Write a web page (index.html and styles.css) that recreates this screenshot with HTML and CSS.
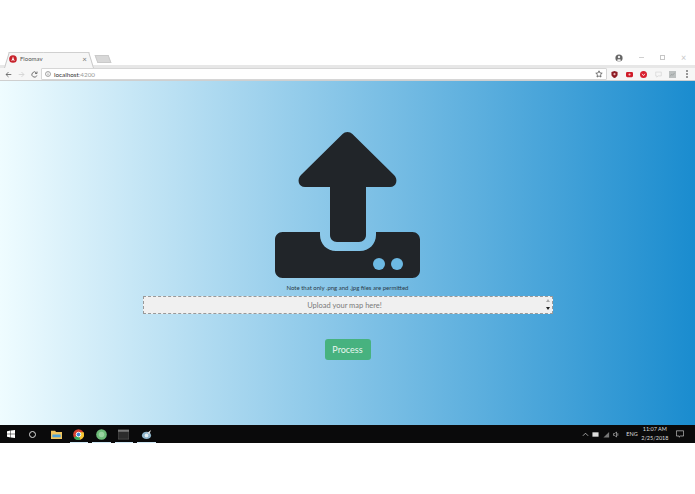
FILE: index.html
```html
<!DOCTYPE html>
<html lang="en">
<head>
  <meta charset="UTF-8" />
  <title>Floomav</title>
  <link rel="stylesheet" href="styles.css">
</head>
<body>
  <div class="shot">
    <!-- browser tabs -->
    <div class="tabstrip">
      <div class="tab">
        <svg class="favicon" viewBox="0 0 10 10"><circle cx="5" cy="5" r="4.800" fill="#c8232c"/><path d="M5 2 3 7.500h1l.4-1.200h1.200L6 7.500h1zM4.700 5.400 5 4.200l.3 1.200z" fill="#fff"/></svg>
        <span class="tab-title">Floomav</span>
        <span class="tab-close">×</span>
      </div>
      <div class="newtab"></div>
      <div class="winctl">
        <svg class="profile" viewBox="0 0 8 8"><circle cx="4" cy="4" r="3.600" fill="#666"/><circle cx="4" cy="3" r="1.200" fill="#eee"/><path d="M1.800 6.200C2.400 5 5.600 5 6.200 6.200L4 7.400z" fill="#eee"/></svg>
        <span class="min"></span>
        <span class="max"></span>
        <span class="close">×</span>
      </div>
    </div>

    <!-- address bar -->
    <div class="toolbar">
      <svg class="nav" viewBox="0 0 10 10"><path d="M9 5H1.500M5 1.500 1.500 5 5 8.500" fill="none" stroke="#5f5f5f" stroke-width="1.200"/></svg>
      <svg class="nav" viewBox="0 0 10 10"><path d="M1 5h7.500M5 1.500 8.500 5 5 8.500" fill="none" stroke="#d0d0d0" stroke-width="1.200"/></svg>
      <svg class="nav" viewBox="0 0 10 10"><path d="M8.400 6.400A3.700 3.700 0 1 1 7.700 2.600M8.600 .8v2.800H5.800" fill="none" stroke="#5f5f5f" stroke-width="1.200"/></svg>
      <div class="omnibox">
        <svg class="info" viewBox="0 0 8 8"><circle cx="4" cy="4" r="3.300" fill="none" stroke="#666" stroke-width=".8"/><path d="M4 3.400v2.400M4 2.200v.7" stroke="#666" stroke-width=".8"/></svg>
        <span class="url">localhost<span class="port">:4200</span></span>
        <svg class="star" viewBox="0 0 10 10"><path d="m5 1 1.200 2.700 2.800.3-2.100 1.900.6 2.900L5 7.400 2.500 8.800l.6-2.900L1 4l2.800-.3z" fill="none" stroke="#555"/></svg>
      </div>
      <div class="exts">
        <svg class="ext" viewBox="0 0 8 8"><path d="M.5 1 4 0l3.500 1v3.200C7.500 6 5 7.600 4 8 3 7.600.5 6 .5 4.200z" fill="#8e1c25"/><circle cx="4" cy="3.600" r="1.200" fill="#e9b7ba"/></svg>
        <svg class="ext" viewBox="0 0 8 8"><rect y="1" width="8" height="6" rx="1.500" fill="#d01c2a"/><circle cx="4" cy="4" r="1.200" fill="#f4c6ca"/></svg>
        <svg class="ext" viewBox="0 0 8 8"><circle cx="4" cy="4" r="4" fill="#d8202f"/><path d="M2.400 3.200 4 5.400l1.600-2.200" fill="none" stroke="#fbdcdf" stroke-width="1.100"/></svg>
        <svg class="ext" viewBox="0 0 8 8"><path d="M.8 1.200h6.400v4.400H3.600L2 7V5.600H.8z" fill="none" stroke="#d6d6d6" stroke-width=".8"/></svg>
        <svg class="ext" viewBox="0 0 8 8"><rect width="8" height="8" fill="#bcc0c0"/><path d="M1.500 6 3 3.500l1.200 1.400L6.500 2" fill="none" stroke="#979c9c" stroke-width=".8"/></svg>
      </div>
      <div class="kebab"><i></i><i></i><i></i></div>
    </div>

    <!-- the page itself -->
    <main class="page">
      <svg class="upload-icon" viewBox="0 0 145 146">
        <path d="M72.500 0c2 0 3.600.7 4.900 2L119 43c4.500 4.600 2.500 12-4 12H91v48c0 4-3 7-7 7H62c-4 0-7-3-7-7V55H30c-6.500 0-8.500-7.400-4-12L67.600 2c1.300-1.300 2.900-2 4.900-2z" fill="#212529"/>
        <path d="M7.500 100H45v3c0 9 7 16 16 16h24c9 0 16-7 16-16v-3h36.500c4.100 0 7.500 3.400 7.500 7.500v31c0 4.100-3.400 7.500-7.500 7.500H7.500c-4.100 0-7.500-3.400-7.500-7.500v-31c0-4.100 3.400-7.500 7.500-7.500z" fill="#212529"/>
        <circle cx="104" cy="132" r="6" class="hole"/>
        <circle cx="122" cy="132" r="6" class="hole"/>
      </svg>
      <p class="note">Note that only .png and .jpg files are permitted</p>
      <div class="dropzone">
        <span>Upload your map here!</span>
        <div class="spin"><i class="up"></i><i class="down"></i></div>
      </div>
      <button class="process">Process</button>
    </main>

    <!-- windows taskbar -->
    <footer class="taskbar">
      <div class="apps">
        <svg class="win" viewBox="0 0 9 9"><path d="M0 1.300 3.900.7v3.500H0zM4.400.6 9 0v4.200H4.400zM0 4.800h3.900v3.500L0 7.700zM4.400 4.800H9V9l-4.600-.6z" fill="#fff"/></svg>
        <span class="cortana"></span>
        <div class="app idle"><svg viewBox="0 0 12 10"><path d="M0 1h4.500l1 1.200H12V10H0z" fill="#f0c55e"/><rect x="1.500" y="5" width="9" height="3" fill="#4ea3d9"/></svg></div>
        <div class="app"><svg viewBox="0 0 12 12"><circle cx="6" cy="6" r="5.800" fill="#d9402f"/><path d="M6 6 1 9.500A5.800 5.800 0 0 0 8 11.600z" fill="#3aa757"/><path d="M6 6l2 5.600A5.800 5.800 0 0 0 11.600 3.500H6z" fill="#f7c632"/><circle cx="6" cy="6" r="2.500" fill="#3f83d8" stroke="#fff"/></svg></div>
        <div class="app"><svg viewBox="0 0 12 12"><circle cx="6" cy="6" r="5.800" fill="#6dbb78"/><circle cx="6" cy="6" r="3" fill="#9ad3a0"/></svg></div>
        <div class="app"><svg viewBox="0 0 12 10"><rect width="12" height="10" fill="#2c2c2c" stroke="#777" stroke-width=".5"/><rect width="12" height="2" fill="#777"/></svg></div>
        <div class="app"><svg viewBox="0 0 12 12"><ellipse cx="6" cy="7" rx="5" ry="4" fill="#8fb4c9"/><circle cx="6" cy="7" r="2" fill="#e6eef2"/><path d="m7 4 4-3-2 5z" fill="#d9d9d9"/></svg></div>
      </div>
      <div class="tray">
        <svg class="tray-ic" viewBox="0 0 8 8"><path d="M1 5.500 4 2.500l3 3" fill="none" stroke="#ddd" stroke-width=".8"/></svg>
        <svg class="tray-ic" viewBox="0 0 8 8"><path d="M.5 1.500h7v5h-7z" fill="#ddd"/></svg>
        <svg class="tray-ic" viewBox="0 0 8 8"><path d="M.5 7.500 7 1v6.500z" fill="#777"/></svg>
        <svg class="tray-ic" viewBox="0 0 8 8"><path d="M.5 3H2l2-2v6L2 5H.5zM5.500 2.500v3" fill="none" stroke="#ccc" stroke-width=".7"/></svg>
        <span class="lang">ENG</span>
        <div class="clock"><span>11:07 AM</span><span>2/25/2018</span></div>
        <svg class="notif" viewBox="0 0 10 10"><path d="M.5 1h9v6.500H5.500L4 9V7.500H.5z" fill="none" stroke="#ddd" stroke-width=".8"/></svg>
      </div>
    </footer>
  </div>
</body>
</html>
```

FILE: styles.css
```css
*{box-sizing:border-box;}

html,body{
  margin:0;
  height:100%;
  background:#fff;
  overflow:hidden;
}

body{
  font-family:Lato,"Liberation Sans",sans-serif;
  color:#212529;
}

.shot{
  display:flex;
  flex-direction:column;
  height:443px;
  padding-top:52px;
}

/* ---- tab strip ---- */
.tabstrip{
  position:relative;
  display:flex;
  align-items:flex-end;
  height:13px;
  padding-left:4px;
  background:#fff;
}
.tab{
  position:relative;
  z-index:1;
  display:flex;
  align-items:center;
  flex:none;
  width:89px;
  height:16px;
  margin-bottom:-3px;
  padding:0 6px 3px 5px;
}
.tab::before,
.tab::after{
  content:"";
  position:absolute;
  z-index:-1;
  top:0;
  bottom:0;
  width:50%;
  background:#f6f6f6;
  border-top:1px solid #d0d0d0;
  transform-origin:bottom;
}
.tab::before{
  left:0;
  border-left:1px solid #c8c8c8;
  transform:skewX(-17deg);
}
.tab::after{
  right:0;
  border-right:1px solid #c8c8c8;
  transform:skewX(17deg);
}
.favicon{width:8px;height:8px;margin-right:3px;}
.tab-title{font-size:6px;color:#555;}
.tab-close{margin-left:auto;font-size:8px;line-height:1;color:#777;}
.newtab{
  flex:none;
  width:14px;
  height:8px;
  margin:0 0 2px 3px;
  background:#d8d8d8;
  border:1px solid #cacaca;
  transform:skewX(20deg);
}
.winctl{
  position:absolute;
  right:0;
  top:1px;
  display:flex;
  align-items:center;
  height:9px;
}
.profile{width:8px;height:8px;margin-right:16px;}
.min{width:5px;height:1px;background:#d0d0d0;margin-right:16px;}
.max{width:5px;height:5px;border:1px solid #c6c6c6;margin-right:16px;}
.close{width:14px;font-size:9px;line-height:1;color:#c6c6c6;}

/* ---- toolbar ---- */
.toolbar{
  display:flex;
  align-items:center;
  height:16px;
  padding:0 0 0 5px;
  background:#f6f6f6;
  border-top:3px solid #e7e7e7;
  border-bottom:1px solid #cfcfcf;
}
.nav{width:7px;height:7px;margin-right:6px;}
.omnibox{
  display:flex;
  align-items:center;
  width:566px;
  height:12px;
  margin-left:-3px;
  padding:0 3px;
  background:#fff;
  border:1px solid #d6d6d6;
  border-radius:1px;
}
.info{width:6px;height:6px;margin-right:3px;}
.url{font-size:6.300px;color:#333;}
.port{color:#999;}
.star{width:8px;height:8px;margin-left:auto;}
.exts{display:flex;align-items:center;gap:7.500px;margin-left:4px;}
.ext{width:7px;height:7px;}
.kebab{display:flex;flex-direction:column;gap:1px;margin-left:10px;}
.kebab i{width:2px;height:2px;background:#777;border-radius:50%;}

/* ---- page content ---- */
.page{
  flex:1;
  display:flex;
  flex-direction:column;
  align-items:center;
  padding-top:51px;
  background:linear-gradient(to right,#effcff 0%,#1a8ccf 100%);
}
.upload-icon{flex:none;width:145px;height:146px;}
.hole{fill:#6cb9e3;}
.note{
  margin:6px 0 4px;
  font-size:6px;
  line-height:8px;
  color:#2a3a46;
}
.dropzone{
  position:relative;
  display:flex;
  align-items:center;
  justify-content:center;
  width:410px;
  height:18px;
  padding-right:6px;
  background:#f0f0f0;
  border:1px dashed #999;
  font-size:7.500px;
  color:#7a7a7a;
}
.spin{
  position:absolute;
  right:2px;
  top:2px;
  bottom:3px;
  display:flex;
  flex-direction:column;
  justify-content:space-between;
}
.spin i{width:0;height:0;border-left:2px solid transparent;border-right:2px solid transparent;}
.spin .up{border-bottom:3px solid #aaa;}
.spin .down{border-top:3px solid #222;}

.process{
  flex:none;
  width:46px;
  height:21px;
  margin-top:25px;
  padding:0;
  background:#47b27f;
  border:0;
  border-radius:3px;
  color:#e9f7f0;
  font-family:inherit;
  font-size:9px;
}

/* ---- taskbar ---- */
.taskbar{
  display:flex;
  align-items:center;
  justify-content:space-between;
  height:18px;
  background:#0a0a0b;
}
.apps{display:flex;align-items:center;height:100%;padding-left:7px;}
.win{width:8px;height:8px;margin-right:14px;}
.cortana{width:7px;height:7px;border:1px solid #ddd;border-radius:50%;margin-right:9px;}
.app{
  position:relative;
  display:flex;
  align-items:center;
  justify-content:center;
  width:22.500px;
  height:100%;
}
.app svg{width:11px;height:11px;}
.app::after{
  content:"";
  position:absolute;
  left:2px;
  right:2px;
  bottom:0;
  height:1px;
  background:#cfe8f6;
}
.app.idle::after{display:none;}
.tray{display:flex;align-items:center;height:100%;padding-right:11px;color:#ddd;}
.tray-ic{width:7px;height:7px;margin-right:3.500px;}
.lang{font-size:5.500px;margin:0 3.500px 0 2.500px;}
.clock{
  display:flex;
  flex-direction:column;
  align-items:center;
  margin-right:7.500px;
  font-size:5.500px;
  line-height:9px;
}
.notif{width:8px;height:8px;}
```
